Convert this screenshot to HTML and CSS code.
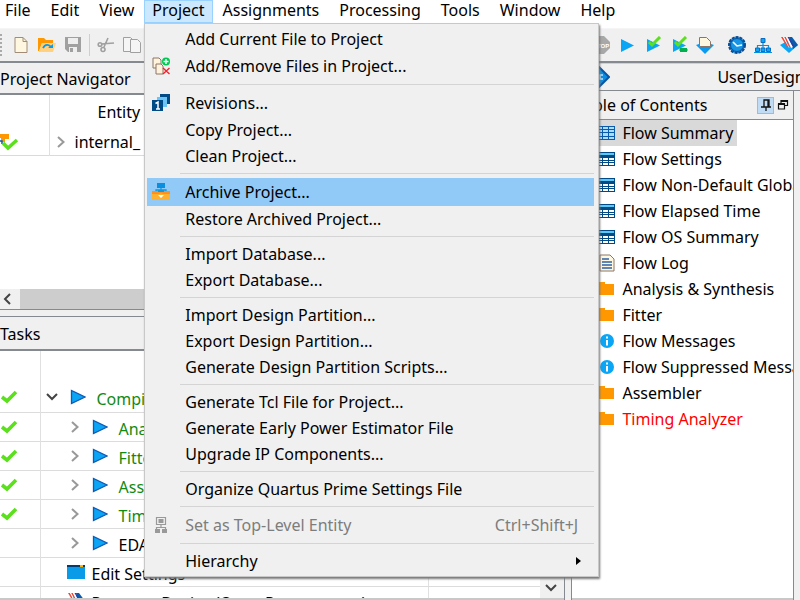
FILE: index.html
```
<!DOCTYPE html>
<html lang="en">
<head>
<meta charset="utf-8">
<title>Quartus Prime</title>
<link rel="stylesheet" href="styles.css">
</head>
<body>
<svg class="defs" aria-hidden="true">
  <symbol id="check" viewBox="0 0 18 14"><path d="M2 7l5 4 9-9" fill="none" stroke="#5be01c" stroke-width="3.6"/></symbol>
  <symbol id="play" viewBox="0 0 16 16"><path d="M1.500 1.500v13L15 8z" fill="#0aa5f5" stroke="#1257b4" stroke-width="1.300"/></symbol>
  <symbol id="right" viewBox="0 0 10 12"><path d="M2 1l5.500 5L2 11" fill="none" stroke="#999" stroke-width="2"/></symbol>
  <symbol id="down" viewBox="0 0 12 10"><path d="M1 2l5 5 5-5" fill="none" stroke="#444" stroke-width="2"/></symbol>
  <symbol id="table" viewBox="0 0 18 14"><path d="M0 0h18v14H0z" fill="#004a86"/><path d="M1 1h16v2H1z" fill="#5cc8f5"/><path d="M1 6h4v2H1zM6 6h5v2H6zM12 6h5v2h-5zM1 9h4v1H1zM6 9h5v1H6zM12 9h5v1h-5zM1 11h4v2H1zM6 11h5v2H6zM12 11h5v2h-5z" fill="#fff"/></symbol>
  <symbol id="table-on" viewBox="0 0 18 14"><path d="M0 0h18v14H0z" fill="#0a5cab"/><path d="M1 1h4v2H1zM6 1h5v2H6zM12 1h5v2h-5zM1 4h4v2H1zM6 4h5v2H6zM12 4h5v2h-5zM1 7h4v3H1zM6 7h5v3H6zM12 7h5v3h-5zM1 11h4v2H1zM6 11h5v2H6zM12 11h5v2h-5z" fill="#a9dcff"/></symbol>
  <symbol id="folder" viewBox="0 0 18 14"><path d="M0 0h8v2h9v11H0z" fill="#ff9800"/></symbol>
  <symbol id="info" viewBox="0 0 18 14"><circle cx="10" cy="7" r="7" fill="#0aa5f5"/><path d="M9 2.500h2v2H9zM9 6h2v5.500H9z" fill="#fff"/></symbol>
  <symbol id="log" viewBox="0 0 18 18"><path d="M3 1h10l4 4v12H3z" fill="#fff7e0" stroke="#8d7468"/><path d="M5 5h7M5 8h10M5 11h10M5 14h10" stroke="#2c62a8" stroke-width="1.500"/></symbol>
  <symbol id="feather" viewBox="0 0 18 18"><path d="M0 9l9-5 9 5-9 8z" fill="#0aa5f5"/><path d="M9 1h3l6 8-5 4z" fill="#0a5cab"/><path d="M1 1h2l6 11-2-1zM4 1h2l5 10-1 1z" fill="#f04a3c"/><path d="M3 1h1l5.500 11H9zM6 1h1.500L13 11l-2 1z" fill="#fff"/><path d="M7.500 1H9l5 9-1 1z" fill="#2a3fa0"/></symbol>
</svg>
<div class="app">
  <nav class="menubar" aria-label="Main menu">
    <button>File</button><button>Edit</button><button>View</button>
    <div class="menu-host">
      <button class="open">Project</button>
      <div class="menu" role="menu">
        <button class="item">Add Current File to Project</button>
        <button class="item tall"><svg class="mi" viewBox="0 0 18 18"><path d="M1 1h6l2 2v8H1z" fill="#fff3dc" stroke="#8d7468"/><path d="M4 7h5l2 2v8H4z" fill="#fff3dc" stroke="#8d7468"/><circle cx="14" cy="4.500" r="4" fill="#00c853"/><path d="M11.500 4.500h5M14 2v5" stroke="#fff" stroke-width="1.400"/><path d="M11 11l6.500 6M17.500 11L11 17" stroke="#f5222d" stroke-width="1.400"/></svg>Add/Remove Files in Project...</button>
        <hr>
        <button class="item tall"><svg class="mi" viewBox="0 0 18 18"><path d="M8 0h10v10H8z" fill="#004a86"/><path d="M5 3h10v10H5z" fill="#6cc4f5"/><path d="M0 6h11v11H0z" fill="#004a86"/><path d="M3.500 9.500L6 8v7M4 15h4" fill="none" stroke="#fff" stroke-width="1.500"/></svg>Revisions...</button>
        <button class="item">Copy Project...</button>
        <button class="item">Clean Project...</button>
        <hr>
        <button class="item tall hot"><svg class="mi" viewBox="0 0 18 18"><path d="M5 0h8v5H5z" fill="#0a8fe0"/><path d="M9 5v2M4 9V7h10v2" fill="none" stroke="#0a9be8" stroke-width="1.300"/><path d="M0 8h18v9H0z" fill="#ff8f1f"/><path d="M6 7h6v2H6z" fill="#0a9be8"/><path d="M0 11h7l2-1 2 1h7v6H0z" fill="#ffb02e"/><path d="M6 12h6l-3 3z" fill="#fff"/></svg>Archive Project...</button>
        <button class="item">Restore Archived Project...</button>
        <hr>
        <button class="item">Import Database...</button>
        <button class="item">Export Database...</button>
        <hr>
        <button class="item">Import Design Partition...</button>
        <button class="item">Export Design Partition...</button>
        <button class="item">Generate Design Partition Scripts...</button>
        <hr>
        <button class="item">Generate Tcl File for Project...</button>
        <button class="item">Generate Early Power Estimator File</button>
        <button class="item">Upgrade IP Components...</button>
        <hr>
        <button class="item">Organize Quartus Prime Settings File</button>
        <hr>
        <button class="item tall" disabled><svg class="mi" viewBox="0 0 18 18"><path d="M4.500 1.500h9v7h-9zM9 8v4M4.500 14v-2.500h9V14" fill="none" stroke="#999" stroke-width="1.200"/><path d="M6.500 3h5v4h-5zM3 13h5v4H3zM10 13h5v4h-5z" fill="#999"/></svg>Set as Top-Level Entity<span class="key">Ctrl+Shift+J</span></button>
        <hr>
        <button class="item">Hierarchy<svg class="sub" viewBox="0 0 6 8"><path d="M0 0l5 4-5 4z"/></svg></button>
      </div>
    </div>
    <button>Assignments</button><button>Processing</button><button>Tools</button><button>Window</button><button>Help</button>
  </nav>

  <div class="toolbar split">
    <div class="tools">
      <i class="grip"></i>
      <button aria-label="New"><svg viewBox="0 0 18 18"><path d="M3 1.500h8l4 4v11H3z" fill="#fff7e0" stroke="#a08c78"/><path d="M11 1.500v4h4" fill="none" stroke="#a08c78"/></svg></button>
      <button aria-label="Open"><svg viewBox="0 0 18 18"><path d="M0 2h6l2 2h7v3H4L1 15H0z" fill="#ff9800"/><path d="M4 7h14l-3 9H1z" fill="#ffd180"/><path d="M5 12c2-4 6-4 8-1" fill="none" stroke="#0a9be8" stroke-width="1.800"/><path d="M10 12h5V8z" fill="#0a9be8"/></svg></button>
      <button aria-label="Save"><svg viewBox="0 0 18 18"><path d="M1 1h16v15H4l-3-3z" fill="#a0a0a0"/><path d="M4 2h10v6H4zM5 11h8v5H5z" fill="#eee"/><path d="M6 12h3v4H6z" fill="#a0a0a0"/></svg></button>
      <i class="bar"></i>
      <button aria-label="Cut"><svg viewBox="0 0 18 18"><g fill="none" stroke="#a0a0a0" stroke-width="1.600"><path d="M4 8l13-1M11 2L7 11"/><circle cx="3" cy="8.500" r="1.800"/><circle cx="6" cy="13.500" r="2"/></g></svg></button>
      <button aria-label="Copy"><svg viewBox="0 0 18 18"><g fill="#f5f5f5" stroke="#a0a0a0"><path d="M.5 1.500h7l3 3v11H.500z"/><path d="M7.500 3.500h7l3 3v10h-10z"/></g></svg></button>
    </div>
    <div class="tools compile">
      <button aria-label="Stop"><svg viewBox="0 0 18 18"><path d="M6 0h6l6 6v6l-6 6H6l-6-6V6z" fill="#a8a8a8"/><text x="1" y="12" class="stop">STOP</text></svg></button>
      <button aria-label="Start"><svg viewBox="0 0 18 18"><path d="M3 3v13l13-6.500z" fill="#0aa5f5"/></svg></button>
      <button aria-label="Analysis"><svg viewBox="0 0 18 18"><path d="M3 3v13l13-6.500z" fill="#0aa5f5"/><path d="M5 6l3 3 8-8" fill="none" stroke="#5be01c" stroke-width="3"/></svg></button>
      <button aria-label="Synthesis"><svg viewBox="0 0 18 18"><path d="M3 3v13l13-6.500z" fill="#0aa5f5"/><path d="M5 6l3 3 8-8" fill="none" stroke="#5be01c" stroke-width="3"/><path d="M10 12h7v4h-7z" fill="#00b050"/><path d="M9 14h9" stroke="#00b050"/></svg></button>
      <button aria-label="Programmer"><svg viewBox="0 0 18 18"><path d="M0 9l9-3 9 3-9 9z" fill="#0a9bf0"/><path d="M3.500 1.500h7l4 4v5h-11z" fill="#fff7e0" stroke="#8d7468"/></svg></button>
      <i class="bar"></i>
      <button aria-label="Timing"><svg viewBox="0 0 18 18"><circle cx="9" cy="9" r="8" fill="#0a9bf0" stroke="#0b4d94" stroke-width="2" stroke-dasharray="3 1"/><circle cx="9" cy="9" r="6.500" fill="#1495e6" stroke="#0b4d94"/><path d="M5 6l4 4 5-1" fill="none" stroke="#fff" stroke-width="1.600"/></svg></button>
      <button aria-label="Hierarchy"><svg viewBox="0 0 18 18"><path d="M7 2.500h4v4H7zM1.500 12h4v3.500h-4zM7 12h4v3.500H7zM12.500 12h4v3.500h-4z" fill="#0aa5f5" stroke="#0a6cc0"/><path d="M9 7v5M3.500 12V9.500h11V12M0 16.500h18" fill="none" stroke="#0a8fe0" stroke-width="1.200"/></svg></button>
      <button aria-label="Device"><svg><use href="#feather"/></svg></button>
    </div>
  </div>

  <main class="split work">
    <div class="left">
      <section class="navigator">
        <h2>Project Navigator</h2>
        <table class="tree">
          <colgroup><col class="c-status"><col></colgroup>
          <tr class="thead"><th></th><th>Entity</th></tr>
          <tr><td><svg class="hier" viewBox="0 0 20 18"><path d="M0 1h9v5H5v3H1V5H0z" fill="#ff9800"/><path d="M0 8h2v3" fill="none" stroke="#0a5cab" stroke-width="1.500"/><path d="M3 10l5 5 9-8" fill="none" stroke="#5be01c" stroke-width="3.500"/></svg></td><td><svg class="tw"><use href="#right"/></svg><span>internal_</span></td></tr>
        </table>
        <div class="hscroll"><button aria-label="Scroll left"><svg viewBox="0 0 10 12"><path d="M7 1L2 6l5 5" fill="none" stroke="#444" stroke-width="2"/></svg></button></div>
      </section>
      <section class="tasks">
        <h2>Tasks</h2>
        <div class="taskbody">
          <table class="tasklist">
            <colgroup><col class="c-check"><col><col class="c-time"></colgroup>
            <tr class="blank"><td></td><td></td><td></td></tr>
            <tr class="top done"><td><svg class="ck"><use href="#check"/></svg></td><td><svg class="dn"><use href="#down"/></svg><svg class="pl"><use href="#play"/></svg><span>Compile Design</span></td><td></td></tr>
            <tr class="done"><td><svg class="ck"><use href="#check"/></svg></td><td><svg class="tw"><use href="#right"/></svg><svg class="pl"><use href="#play"/></svg><span>Analysis &amp; Synthesis</span></td><td></td></tr>
            <tr class="done"><td><svg class="ck"><use href="#check"/></svg></td><td><svg class="tw"><use href="#right"/></svg><svg class="pl"><use href="#play"/></svg><span>Fitter</span></td><td></td></tr>
            <tr class="done"><td><svg class="ck"><use href="#check"/></svg></td><td><svg class="tw"><use href="#right"/></svg><svg class="pl"><use href="#play"/></svg><span>Assembler</span></td><td></td></tr>
            <tr class="done"><td><svg class="ck"><use href="#check"/></svg></td><td><svg class="tw"><use href="#right"/></svg><svg class="pl"><use href="#play"/></svg><span>Timing Analyzer</span></td><td></td></tr>
            <tr><td></td><td><svg class="tw"><use href="#right"/></svg><svg class="pl"><use href="#play"/></svg><span>EDA Netlist Writer</span></td><td></td></tr>
            <tr class="leaf"><td></td><td><svg class="win" viewBox="0 0 18 14"><path d="M0 0h18v14H0z" fill="#0a9be8"/><path d="M0 0h18v2H0z" fill="#003c71"/><path d="M13 0h3v2h-3z" fill="#ffb300"/></svg><span>Edit Settings</span></td><td></td></tr>
            <tr class="leaf"><td></td><td><svg class="win device"><use href="#feather"/></svg><span>Program Device (Open Programmer)</span></td><td></td></tr>
          </table>
          <div class="vscroll"><button aria-label="Scroll down"><svg><use href="#down"/></svg></button></div>
        </div>
        <div class="bottom"></div>
      </section>
    </div>

    <div class="right">
      <div class="tab"><svg class="dia" viewBox="0 0 22 22"><path d="M11 1l10 10-10 10L1 11z" fill="#0a8fe0" stroke="#0b55a5" stroke-width="2"/><path d="M15 9h-3v4h3" fill="none" stroke="#bfe6ff" stroke-width="1.500"/></svg><span>UserDesigns</span></div>
      <div class="report">
        <div class="toc">
          <header><h2>Table of Contents</h2>
            <button class="pin" aria-label="Pin"><svg viewBox="0 0 12 12"><path d="M4 8V1h5v7M1 8h10M6 8v4M8 1v7" fill="none" stroke="#111" stroke-width="1.300"/></svg></button>
            <button aria-label="Float"><svg viewBox="0 0 12 12"><path d="M4 4V1.500h6.500v5H8M1.500 5h6v5h-6z" fill="none" stroke="#111" stroke-width="1.200"/><path d="M4 2h7M1 5h7" stroke="#111" stroke-width="2"/></svg></button>
          </header>
          <ul>
            <li class="sel"><a href="#s"><svg><use href="#table-on"/></svg><span>Flow Summary</span></a></li>
            <li><a href="#s"><svg><use href="#table"/></svg><span>Flow Settings</span></a></li>
            <li><a href="#s"><svg><use href="#table"/></svg><span>Flow Non-Default Global Settings</span></a></li>
            <li><a href="#s"><svg><use href="#table"/></svg><span>Flow Elapsed Time</span></a></li>
            <li><a href="#s"><svg><use href="#table"/></svg><span>Flow OS Summary</span></a></li>
            <li><a href="#s"><svg class="log"><use href="#log"/></svg><span>Flow Log</span></a></li>
            <li><a href="#s"><svg><use href="#folder"/></svg><span>Analysis &amp; Synthesis</span></a></li>
            <li><a href="#s"><svg><use href="#folder"/></svg><span>Fitter</span></a></li>
            <li><a href="#s"><svg><use href="#info"/></svg><span>Flow Messages</span></a></li>
            <li><a href="#s"><svg><use href="#info"/></svg><span>Flow Suppressed Messages</span></a></li>
            <li><a href="#s"><svg><use href="#folder"/></svg><span>Assembler</span></a></li>
            <li class="bad"><a href="#s"><svg><use href="#folder"/></svg><span>Timing Analyzer</span></a></li>
          </ul>
          <div class="bottom"></div>
        </div>
      </div>
    </div>
  </main>
</div>
</body>
</html>
```
FILE: styles.css
```
* { box-sizing: border-box; }
body { margin: 0; font: 16px/24px "Noto Sans", "Open Sans", sans-serif; color: #000; background: #f0f0f0; }
button { font: inherit; color: inherit; border: 0; background: none; padding: 0; }
h2 { margin: 0; font: inherit; white-space: nowrap; }
svg { flex: none; display: block; }
.defs { display: none; }
.app { height: 100vh; display: flex; flex-direction: column; overflow: hidden; }
.split { display: grid; grid-template-columns: minmax(0, 5fr) minmax(0, 2fr); }

/* Menu bar and drop-down */
.menubar { display: flex; height: 28px; flex: none; background: #fff; padding-bottom: 5px; }
.menubar > button, .menu-host > button { padding: 0 10px 3px; line-height: 20px; height: 23px; }
.menubar > button:first-child { padding-left: 5px; }
.menu-host { position: relative; }
.menu-host > .open { display: block; padding: 0 8px 3px; background: #cce8ff; box-shadow: inset 0 0 0 1px #99d1ff; }
.menu { position: absolute; z-index: 5; left: 0; top: 23px; width: 455px; background: #f0f0f0; border: 1px solid #c8c8c8; padding: 2px 4px 2px 2px; box-shadow: 1px 2px 2px #777; }
.item { display: flex; align-items: center; width: 100%; height: 26px; padding-left: 38px; padding-right: 16px; white-space: nowrap; text-align: left; line-height: 26px; }
.tall { height: 28px; padding-left: 5px; }
.mi { width: 18px; height: 18px; margin-right: 15px; }
.hot { background: #91c9f7; }
.item:disabled { color: #7d7d7d; }
.key { margin-left: auto; }
.sub { width: 6px; height: 8px; margin-left: auto; margin-right: -4px; }
.menu hr { margin: 4px 0 4px 33px; border: 0; height: 1px; background: #d4d4d4; }

/* Toolbar */
.toolbar { flex: none; height: 35px; border-top: 1px solid #f5f5f5; border-bottom: 2px solid #858990; }
.tools { display: flex; align-items: center; overflow: hidden; }
.tools button { width: 26px; height: 26px; display: flex; align-items: center; justify-content: center; flex: none; }
.tools svg { width: 18px; height: 18px; }
.compile { padding-left: 17px; }
.grip { width: 2px; height: 22px; margin-right: 6px; background: repeating-linear-gradient(#aaa 0 2px, #f0f0f0 2px 4px); }
.bar { width: 1px; height: 22px; margin: 0 3px; background: #cfcfcf; }
.stop { font: bold 6px "Liberation Sans", sans-serif; fill: #fff; }

/* Left docks */
.work { flex: 1; min-height: 0; }
.left { display: flex; flex-direction: column; min-height: 0; border-right: 1px solid #858990; margin-right: 6px; }
.left h2 { height: 32px; line-height: 32px; border-bottom: 2px solid #858990; }
.navigator { display: flex; flex-direction: column; flex: 0 0 247px; border-bottom: 1px solid #858990; background: linear-gradient(#f0f0f0 32px, #fff 32px); }
table { border-collapse: collapse; width: 100%; table-layout: fixed; }
td, th { padding: 0; font-weight: normal; text-align: left; white-space: nowrap; border-right: 1px solid #e0e0e0; }
td:last-child, th:last-child { border-right: 0; }
.c-status { width: 49px; }
.tree .thead { height: 34px; }
.tree th:last-child { padding-left: 48px; }
.tree tr:last-child { height: 26px; border-bottom: 1px solid #dadada; }
.tree td:last-child { display: flex; align-items: center; height: 26px; padding-left: 6px; gap: 9px; }
.hier { width: 20px; height: 18px; }
.tw { width: 10px; height: 12px; }
.hscroll { margin-top: auto; height: 20px; background: linear-gradient(90deg, #f0f0f0 20px, #cdcdcd 20px); }
.hscroll button { width: 20px; height: 20px; padding-left: 3px; }
.hscroll svg { width: 10px; height: 12px; }
.tasks { margin-top: 6px; flex: 1; min-height: 0; display: flex; flex-direction: column; border-top: 1px solid #858990; }
.tasks h2 { height: 34px; line-height: 34px; }
.taskbody { flex: 1; min-height: 0; overflow: hidden; display: flex; background: #fff; }
.tasklist { flex: 1; align-self: flex-start; }
.c-check { width: 40px; }
.c-time { width: 111px; }
.tasklist tr { height: 29px; border-bottom: 1px solid #dcdcdc; }
.tasklist .blank { height: 32px; border-bottom: 0; }
.tasklist td:nth-child(2) { display: flex; align-items: center; height: 28px; padding-left: 29px; overflow: hidden; }
.tasklist .blank td:nth-child(2) { height: 32px; }
.tasklist .top td:nth-child(2) { padding-left: 5px; }
.tasklist .leaf td:nth-child(2) { padding-left: 26px; }
.tasklist span { padding-top: 4px; }
.done { color: #128a12; }
.ck { width: 18px; height: 14px; }
.dn { width: 12px; height: 10px; margin-right: 12px; }
.pl { width: 16px; height: 16px; margin-right: 11px; }
.tasklist .tw { margin-right: 12px; }
.win { width: 18px; height: 14px; margin-right: 7px; }
.device { height: 18px; }
.vscroll { width: 24px; background: #f0f0f0; display: flex; align-items: flex-end; }
.vscroll button { width: 20px; height: 20px; padding-left: 5px; }
.vscroll svg { width: 12px; height: 10px; }
.bottom { flex: none; height: 2px; background: #c8c8c8; }

/* Report window */
.right { display: flex; flex-direction: column; min-width: 0; min-height: 0; border-left: 1px solid #858990; }
.tab { flex: none; display: flex; align-items: center; height: 28px; overflow: hidden; border-top: 1px solid #d0d0d0; border-bottom: 1px solid #858990; }
.tab span { margin-left: 107px; }
.dia { width: 22px; height: 22px; margin-left: 16px; }
.report { flex: 1; min-height: 0; padding-right: 6px; }
.toc { height: 100%; display: flex; flex-direction: column; background: #fff; border-right: 1px solid #858990; }
.toc header { display: flex; align-items: center; height: 29px; flex: none; background: #f0f0f0; border-bottom: 1px solid #858990; padding-right: 2px; }
.toc h2 { flex: 1; padding-left: 4px; }
.toc header button { width: 17px; height: 17px; display: flex; align-items: center; justify-content: center; }
.toc header svg { width: 12px; height: 12px; }
.toc header .pin { background: #c0dcf5; box-shadow: inset 0 0 0 1px #90c0ea; }
.toc ul { list-style: none; margin: 0; padding: 0 0 0 25px; flex: 1; overflow: hidden; }
.toc a { display: inline-flex; align-items: center; height: 26px; color: inherit; text-decoration: none; white-space: nowrap; gap: 7px; padding-right: 4px; }
.toc li { height: 26px; }
.toc svg { width: 18px; height: 14px; }
.toc .log { height: 18px; }
.sel a { background: #d9d9d9; }
.bad { color: #f00; }
```
